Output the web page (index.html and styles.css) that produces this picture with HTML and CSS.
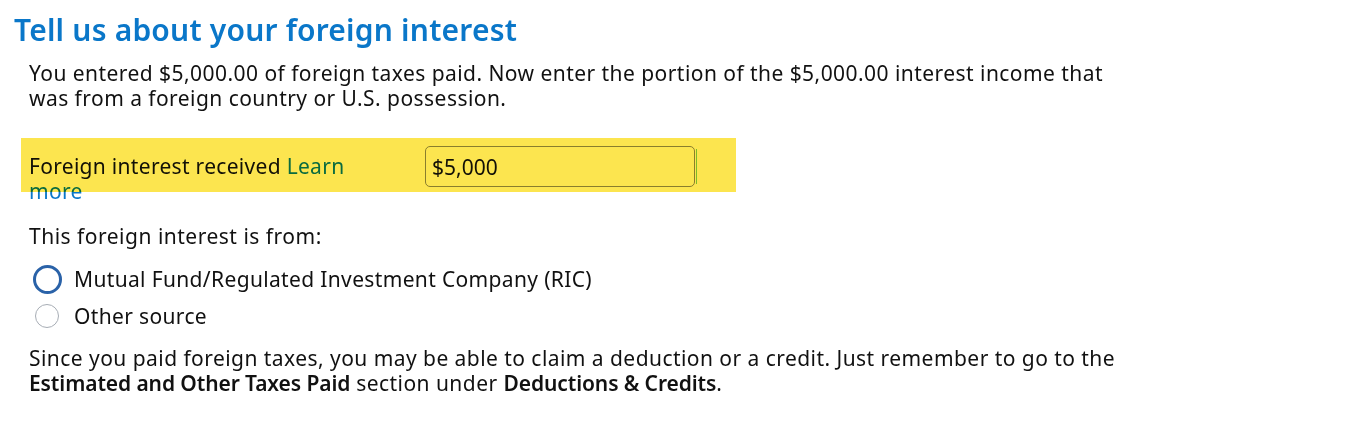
FILE: index.html
```html
<!DOCTYPE html>
<html lang="en">
<head>
<meta charset="utf-8">
<title>Tell us about your foreign interest</title>
<link rel="stylesheet" href="styles.css">
</head>
<body>
<main class="page">
  <h1 class="title">Tell us about your foreign interest</h1>
  <div class="content">
    <p class="intro">You entered $5,000.00 of foreign taxes paid. Now enter the portion of the $5,000.00 interest income that was from a foreign country or U.S. possession.</p>

    <div class="field-row">
      <div class="field-label">Foreign interest received <a class="link" href="#">Learn more</a></div>
      <div class="input-wrap"><input class="money" type="text" value="$5,000"></div>
      <div class="highlight"></div>
    </div>

    <p class="question">This foreign interest is from:</p>
    <div class="radios">
      <label class="radio-row"><span class="radio radio-focus"></span><span>Mutual Fund/Regulated Investment Company (RIC)</span></label>
      <label class="radio-row"><span class="radio"></span><span>Other source</span></label>
    </div>

    <p class="note">Since you paid foreign taxes, you may be able to claim a deduction or a credit. Just remember to go to the <b>Estimated and Other Taxes Paid</b> section under <b>Deductions &amp; Credits</b>.</p>
  </div>
</main>
</body>
</html>
```
FILE: styles.css
```css
* { box-sizing: border-box; }
html, body { margin: 0; padding: 0; background: #ffffff; }
body {
  font-family: "Noto Sans", "Lato", "Liberation Sans", sans-serif;
  color: #111111;
}
.page { padding: 10px 0 0 14px; }
.title {
  margin: 0;
  font-size: 30px;
  line-height: 40px;
  font-weight: 600;
  letter-spacing: 0.2px;
  color: #0a77c9;
}
.content { padding-left: 15px; }
.intro {
  margin: 11px 0 0 0;
  width: 1100px;
  font-size: 21px;
  line-height: 25px;
  letter-spacing: 0.45px;
}
.field-row {
  position: relative;
  margin-top: 27px;
  display: flex;
  align-items: flex-start;
}
.field-label {
  width: 355px;
  margin-right: 41px;
  padding-top: 16px;
  font-size: 21px;
  line-height: 25px;
  letter-spacing: 0.3px;
}
.link { color: #0a77c9; text-decoration: none; }
.input-wrap {
  padding-top: 8px;
  border-right: 2px solid transparent;
  position: relative;
}
.input-wrap::after {
  content: "";
  position: absolute;
  right: -2px;
  top: 11px;
  width: 1px;
  height: 35px;
  background: #7fd17f;
}
.money {
  display: block;
  width: 270px;
  height: 41px;
  border: 1px solid #8c8c8c;
  border-radius: 5px;
  padding: 0 6px;
  font-family: inherit;
  font-size: 21px;
  color: #111111;
  background: #ffffff;
  outline: none;
}
.highlight {
  position: absolute;
  left: -8px;
  top: 0;
  width: 715px;
  height: 54px;
  background: #fce54f;
  mix-blend-mode: multiply;
  pointer-events: none;
}
.question {
  margin: 20px 0 0 0;
  font-size: 21px;
  line-height: 25px;
  letter-spacing: 0.5px;
}
.radios {
  margin-top: 15px;
  display: flex;
  flex-direction: column;
  gap: 7px;
}
.radio-row {
  display: flex;
  align-items: center;
  height: 30px;
  font-size: 21px;
  line-height: 25px;
  letter-spacing: 0.35px;
}
.radio {
  width: 24px;
  height: 24px;
  border-radius: 50%;
  border: 1px solid #a7adb5;
  margin: 0 15px 0 6px;
  background: #fff;
  flex: none;
}
.radio-focus {
  width: 29px;
  height: 29px;
  border: 3px solid #2a62a8;
  margin: 0 12px 0 4px;
}
.note {
  margin: 15px 0 0 0;
  width: 1100px;
  font-size: 21px;
  line-height: 25px;
  letter-spacing: 0.45px;
}
.note b { font-weight: 600; letter-spacing: -0.1px; }
```
